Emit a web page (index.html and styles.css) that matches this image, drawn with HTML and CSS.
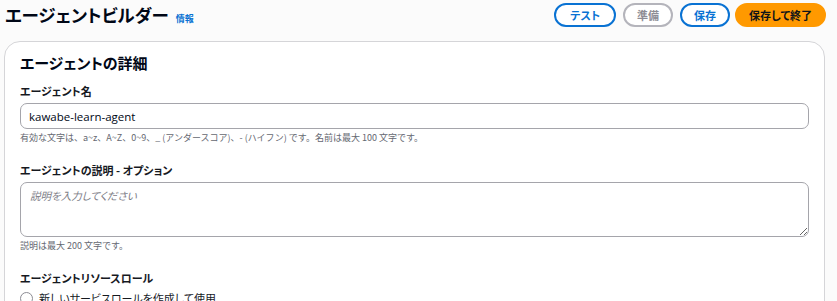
FILE: index.html
```html
<!DOCTYPE html>
<html>
<head>
    <title>エージェントビルダー</title>
    <link rel="stylesheet" href="styles.css">
</head>
<body>
    <div class="header">
        <div class="title">
            <h1>エージェントビルダー</h1>
            <a class="info" href="#">情報</a>
        </div>
        <div class="actions">
            <button class="btn btn-outline btn-wide">テスト</button>
            <button class="btn btn-disabled">準備</button>
            <button class="btn btn-outline">保存</button>
            <button class="btn btn-primary">保存して終了</button>
        </div>
    </div>

    <div class="card">
        <h2>エージェントの詳細</h2>

        <div class="field">
            <label>エージェント名</label>
            <input type="text" value="kawabe-learn-agent">
            <div class="hint">有効な文字は、a~z、A~Z、0~9、_ (アンダースコア)、- (ハイフン) です。名前は最大 100 文字です。</div>
        </div>

        <div class="field">
            <label>エージェントの説明 - オプション</label>
            <textarea placeholder="説明を入力してください"></textarea>
            <div class="hint">説明は最大 200 文字です。</div>
        </div>

        <div class="field">
            <label>エージェントリソースロール</label>
            <div class="radio-row">
                <span class="radio"></span>
                <span>新しいサービスロールを作成して使用</span>
            </div>
        </div>
    </div>
</body>
</html>
```

FILE: styles.css
```css
body {
    margin: 0;
    padding: 0 11px 0 4px;
    background-color: #fbfbfb;
    font-family: "Noto Sans CJK JP", "Noto Sans", sans-serif;
    font-feature-settings: "palt";
    color: #16191f;
}
.header {
    display: flex;
    justify-content: space-between;
    align-items: center;
    height: 30px;
    margin-bottom: 11px;
}
.title {
    display: flex;
    align-items: baseline;
    gap: 7px;
    padding-left: 1px;
}
h1 {
    font-size: 17.5px;
    font-weight: 700;
    margin: 0;
    line-height: 30px;
    color: #000716;
}
.info {
    font-size: 9px;
    font-weight: 700;
    color: #0972d3;
    text-decoration: none;
}
.actions {
    display: flex;
    gap: 7px;
}
.btn {
    height: 24px;
    padding: 0 12px;
    border-radius: 14px;
    font-family: inherit;
    font-feature-settings: inherit;
    font-size: 11px;
    font-weight: 700;
    background: #fff;
    cursor: pointer;
}
.btn-wide {
    padding: 0 14px;
}
.btn-outline {
    border: 2px solid #0972d3;
    color: #0972d3;
}
.btn-disabled {
    border: 2px solid #b4b4bb;
    color: #8d8d95;
}
.btn-primary {
    border: 2px solid #ff9900;
    background: #ff9900;
    color: #0f141a;
    padding: 0 12px;
    margin-left: -2px;
}
.card {
    background: #fff;
    border: 1px solid #d5d5d8;
    border-radius: 16px;
    margin-right: 1px;
    padding: 10px 15px 20px;
}
h2 {
    font-size: 15px;
    font-weight: 700;
    margin: 0 0 9px;
    line-height: 22px;
    color: #000716;
}
.field {
    margin-bottom: 18px;
}
label {
    display: block;
    font-size: 11px;
    font-weight: 700;
    line-height: 16px;
    margin-bottom: 4px;
}
input, textarea {
    display: block;
    width: 100%;
    box-sizing: border-box;
    border: 1px solid #a5a5ab;
    border-radius: 7px;
    background: #fff;
    font-family: "Open Sans", "Noto Sans CJK JP", sans-serif;
    font-feature-settings: inherit;
    font-size: 11.5px;
    color: #000716;
    padding: 0 8px;
}
input {
    height: 26px;
}
textarea {
    height: 55px;
    padding: 5px 9px;
    resize: vertical;
    font-family: "Noto Sans CJK JP", sans-serif;
    font-size: 10.5px;
}
textarea::placeholder {
    font-style: italic;
    color: #7d7d86;
}
.hint {
    font-size: 9px;
    font-feature-settings: normal;
    color: #656871;
    margin-top: 3px;
    line-height: 12px;
}
.radio-row {
    display: flex;
    align-items: center;
    gap: 6px;
    font-size: 11px;
    line-height: 16px;
    margin-top: 2px;
}
.radio {
    width: 11px;
    height: 11px;
    border: 1px solid #8c8c94;
    border-radius: 50%;
}
```
